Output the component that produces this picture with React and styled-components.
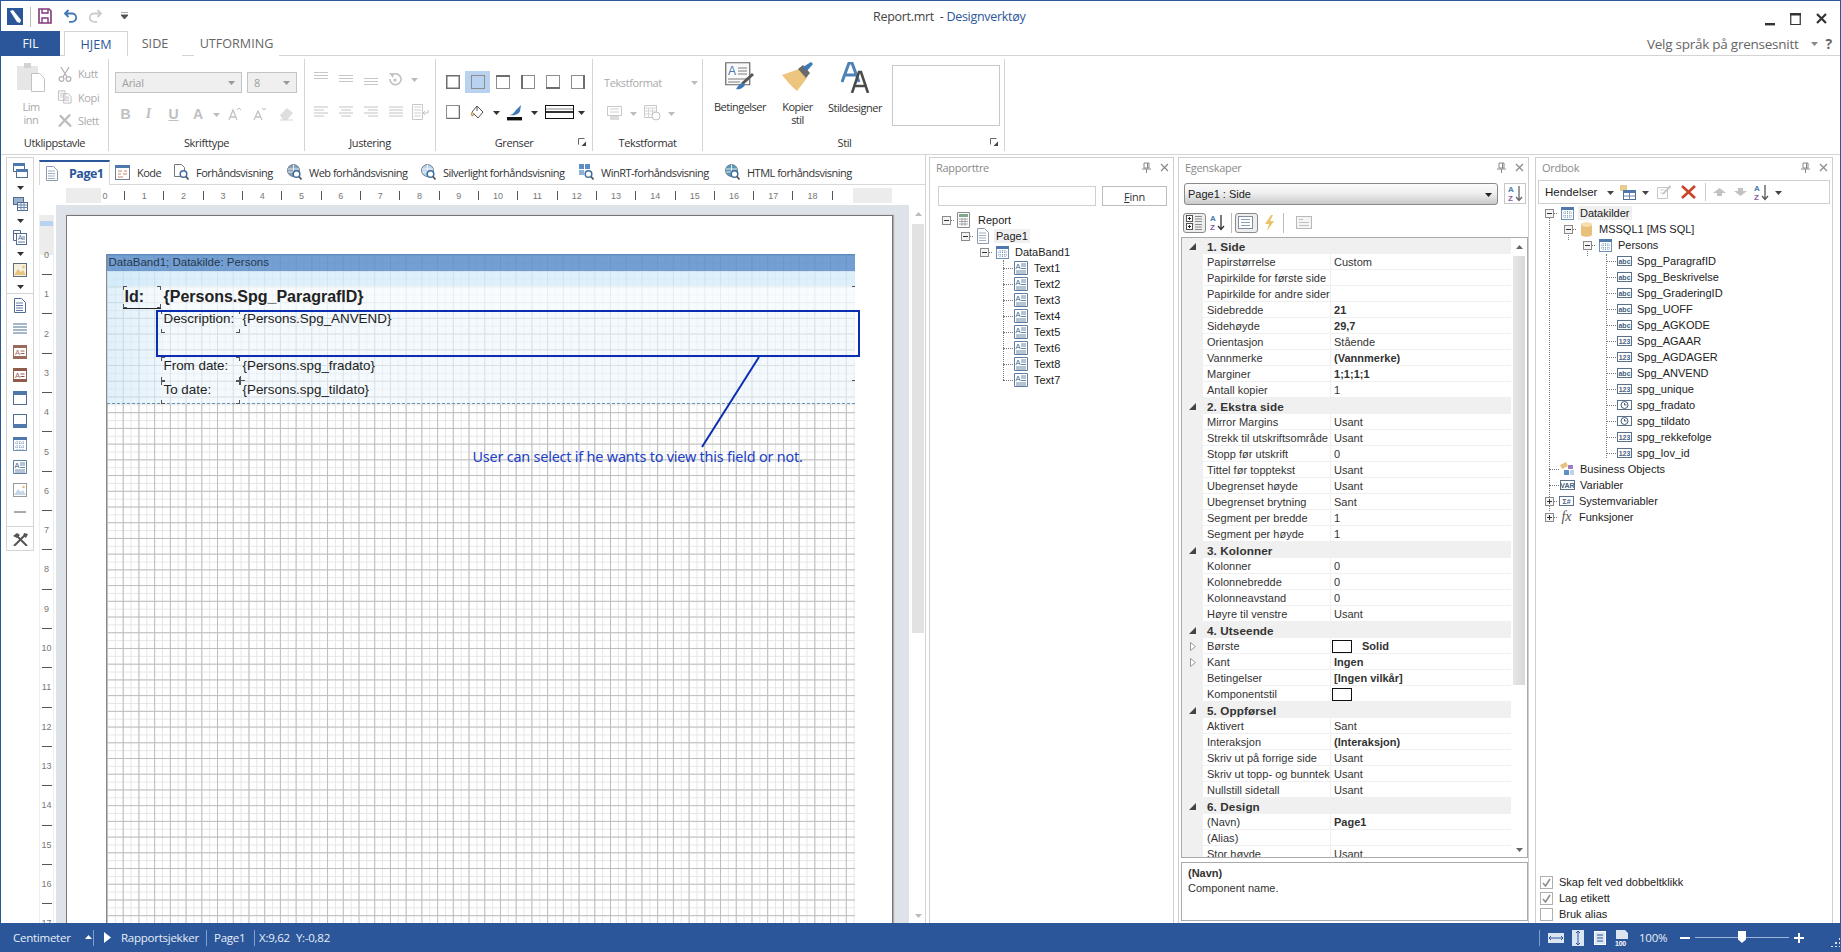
import React from 'react'
import styled, { createGlobalStyle } from 'styled-components'

const BLUE = '#2b579a'
const UI = `"Open Sans", "Liberation Sans", sans-serif`
const ARIAL = `"Liberation Sans", Arial, sans-serif`

const Global = createGlobalStyle`
  html, body { margin: 0; padding: 0; background: #fff; overflow: hidden; }
  * { box-sizing: border-box; }
  svg { display: block; flex: none; }
`

//---------------- icons ---------------------------------------------
const Svg = ({ w = 16, h = 16, children, ...rest }) => (
  <svg width={w} height={h} viewBox={`0 0 ${w} ${h}`} fill="none" {...rest}>{children}</svg>
)
const Caret = ({ color = '#444', up }) => (
  <Svg w={7} h={5}><path d={up ? 'M0 4h7L3.5 0z' : 'M0 1h7L3.5 5z'} fill={color} /></Svg>
)
const AppLogo = () => (
  <Svg w={16} h={17}><rect width="16" height="17" fill={BLUE} /><path d="M3 3l3-1 8 10-1 3-3-1z" fill="#fff" /></Svg>
)
const SaveIcon = () => (
  <Svg w={14} h={16}>
    <path d="M1 1h10l2 2v12H1z" stroke="#80397b" strokeWidth="1.6" />
    <path d="M4 1v4h6V1M4 15v-5h6v5" stroke="#80397b" strokeWidth="1.4" />
  </Svg>
)
const UndoIcon = ({ color, flip }) => (
  <Svg w={14} h={14} style={flip ? { transform: 'scaleX(-1)' } : null}>
    <path d="M4.5 1L1 4.5 4.5 8M1.5 4.5H8a4.2 4.2 0 010 8.4H5" stroke={color} strokeWidth="1.8" />
  </Svg>
)
const PinIcon = () => (
  <Svg w={9} h={11}><path d="M2 1h5v5H2zM5.5 1v5M0 7h9M4.5 7v4" stroke="#8a8a8a" /></Svg>
)
const CloseIcon = () => (
  <Svg w={9} h={9}><path d="M1 1l7 7M8 1L1 8" stroke="#8a8a8a" strokeWidth="1.2" /></Svg>
)
const WinMin = () => <Svg w={10} h={14}><rect y="11" width="10" height="2.4" fill="#333" /></Svg>
const WinMax = () => <Svg w={11} h={12}><path d="M.75 1.5h9.5v10H.75z" stroke="#333" strokeWidth="1.2" /><rect width="11" height="2.5" fill="#333" /></Svg>
const WinClose = () => <Svg w={11} h={11}><path d="M1 1l9 9M10 1l-9 9" stroke="#333" strokeWidth="2.2" /></Svg>

const PasteIcon = () => (
  <Svg w={28} h={30}>
    <path d="M0 4h21v24H0z" fill="#e6e6e6" /><path d="M7 1h7v5H7z" fill="#d2d2d2" />
    <path d="M14.5 11.5h8l5 5v13h-13z" fill="#fff" stroke="#c2c2c2" />
  </Svg>
)
const CutIcon = () => (
  <Svg w={14} h={16}>
    <circle cx="3.5" cy="13" r="2.4" stroke="#b4b4b4" strokeWidth="1.3" /><circle cx="10.5" cy="13" r="2.4" stroke="#b4b4b4" strokeWidth="1.3" />
    <path d="M5 11L11 1M9 11L3 1" stroke="#b4b4b4" strokeWidth="1.3" />
  </Svg>
)
const CopyIcon = () => (
  <Svg w={15} h={14}>
    <path d="M.5.5h7v10h-7zM6 3.5h5l3 3v7H6z" fill="#fff" stroke="#bbb" />
    <path d="M2 3h4M2 5h3M2 7h3M8 7h4M8 9h4M8 11h4" stroke="#c4c4c4" />
  </Svg>
)
const DeleteIcon = () => (
  <Svg w={15} h={15}><path d="M1 14L13 1M2 2l12 12" stroke="#bcbcbc" strokeWidth="2.4" /></Svg>
)
const Bars = ({ kind = 'left', color = '#c4c4c4', top = 0 }) => {
  const right = kind === 'right'
  const short = kind === 'justify' ? 14 : 10
  const x2 = right ? 4 : kind === 'center' ? 2 : 0
  return (
    <Svg w={14} h={12}>
      <path d={`M0 ${1 + top}h14M${x2} ${4 + top}h${short}M0 ${7 + top}h14M${x2} ${10 + top}h${short}`} stroke={color} />
    </Svg>
  )
}
const VAlignIcon = ({ at }) => (
  <Svg w={14} h={14}>
    <path d={`M0 ${at}.5h14M0 ${at + 3}.5h14M0 ${at + 6}.5h14`} stroke="#c6c6c6" />
  </Svg>
)
const RotateIcon = () => (
  <Svg w={14} h={15}>
    <path d="M4 3a5.5 5.5 0 11-2 4" stroke="#c2c2c2" strokeWidth="1.6" /><path d="M1 1l5 0-1 5z" fill="#c2c2c2" /><circle cx="7" cy="8" r="1.6" fill="#c2c2c2" />
  </Svg>
)
const WrapIcon = () => (
  <Svg w={17} h={17}>
    <path d="M.5.5h10v15H.5z" stroke="#c8c8c8" /><path d="M2 3h7M2 6h7M2 9h7M2 12h7" stroke="#d0d0d0" /><path d="M16 6v3h-5M13 7l-2 2 2 2" stroke="#c4c4c4" />
  </Svg>
)
const BorderBox = ({ side }) => {
  const dark = '#6e6e6e'
  return (
    <Svg w={14} h={14}>
      <rect x=".5" y=".5" width="13" height="13" stroke={side === 'all' ? dark : '#8d8d8d'} strokeWidth={side === 'all' ? 2 : 1} />
      {side === 'top' && <rect width="14" height="2" fill={dark} />}
      {side === 'left' && <rect width="2" height="14" fill={dark} />}
      {side === 'bottom' && <rect y="12" width="14" height="2" fill={dark} />}
      {side === 'right' && <rect x="12" width="2" height="14" fill={dark} />}
      {side === 'shadow' && <path d="M1 13.5h13M13.5 1v13" stroke={dark} strokeWidth="1.6" />}
    </Svg>
  )
}
const FillIcon = () => (
  <Svg w={15} h={15}>
    <path d="M7 1l6 6-5 6-6-6z" fill="#fff" stroke="#555" /><path d="M2 7l-1 3 2 1 1-3" fill="#f0c87c" stroke="#8a6b35" strokeWidth=".6" />
    <path d="M7 1v5" stroke="#555" />
  </Svg>
)
const PenIcon = () => (
  <Svg w={16} h={17}>
    <path d="M2 11c3 0 5-2 7-5l5-5-1 6c-1 3-5 5-11 4z" fill="#3e7ab8" /><rect y="13" width="15" height="3.4" fill="#111" />
  </Svg>
)
const LineStyle = () => (
  <Svg w={29} h={14}><rect x=".5" y=".5" width="28" height="13" stroke="#111" fill="#fff" /><path d="M1 7h27" stroke="#333" strokeWidth="2" /><path d="M1 4h27" stroke="#888" /></Svg>
)
const Launcher = () => (
  <Svg w={8} h={8}><path d="M.5 6.5V.5h6" stroke="#666" /><path d="M8 8H3.5L8 3.5z" fill="#444" /></Svg>
)
const FontA = ({ mark, small }) => (
  <Svg w={14} h={14}>
    <path d={small ? 'M1 13l4-9 4 9M2.5 10h5' : 'M1 13l4-10 4 10M2.5 10h5'} stroke="#c2c2c2" strokeWidth="1.3" />
    {mark === 'up' && <path d="M9 3l2-2 2 2" stroke="#bbb" />}
    {mark === 'down' && <path d="M9 1l2 2 2-2" stroke="#bbb" />}
  </Svg>
)
const EraserIcon = () => (
  <Svg w={15} h={14}><path d="M1 8l7-7 6 5-6 7H4z" fill="#dedede" /><path d="M1 13h13" stroke="#d5d5d5" /></Svg>
)
const TplIcon = () => (
  <Svg w={15} h={15}><path d="M.5.5h14v9h-14z" stroke="#c8c8c8" /><path d="M3 10h9v4H3z" fill="#dcdcdc" /><path d="M3 3h9M3 6h9" stroke="#d0d0d0" /></Svg>
)
const CalIcon = () => (
  <Svg w={17} h={16}><path d="M.5.5h12v12H.5z" stroke="#c8c8c8" /><path d="M.5 3h12M4.5 3v9M8.5 3v9M.5 6h12M.5 9h12" stroke="#d6d6d6" /><circle cx="12" cy="11" r="4" fill="#fff" stroke="#c0c0c0" /></Svg>
)
const ConditionIcon = () => (
  <Svg w={30} h={30}>
    <path d="M.75.75h24v22h-24z" fill="#fafafa" stroke="#666" strokeWidth="1.2" />
    <text x="3" y="13" fontFamily={ARIAL} fontSize="12" fill="#4a7ab0">A</text>
    <path d="M13 6h9M13 9h9M13 12h9M3 17h19M3 20h12" stroke="#7c7c7c" />
    <path d="M28 12L17 22" stroke="#555" strokeWidth="3" /><path d="M18 21c-3 0-5 3-7 6 4 1 7-1 9-4z" fill="#3f78b3" />
  </Svg>
)
const BrushIcon = () => (
  <Svg w={31} h={30}>
    <path d="M0 13L17 7l8 9-10 13C9 24 5 19 0 13z" fill="#edc57f" /><path d="M16 7l5-4 7 8-4 5z" fill="#6a6a6a" />
    <path d="M21 5l8-5 2 2-6 7z" fill="#3d7bb5" />
  </Svg>
)
const StyleDesignerIcon = () => (
  <Svg w={29} h={31}>
    <path d="M1 20L8 1h3l7 19M4 13h10" stroke="#4f81b5" strokeWidth="3" />
    <path d="M11 31L18 10h2l7 21M14 24h12" stroke="#4b4b4b" strokeWidth="2.6" />
  </Svg>
)
const TextItem = () => (
  <Svg w={14} h={14}>
    <path d="M.5.5h13v13H.5z" fill="#fff" stroke="#5d7da3" />
    <text x="1.5" y="8" fontFamily={ARIAL} fontSize="7.5" fill="#3d5f88">A</text>
    <path d="M7 3h5M7 5h5M7 7.5h5M2 10h10M2 12h10" stroke="#6d86a5" />
  </Svg>
)
const ReportIcon = () => (
  <Svg w={14} h={16}>
    <path d="M.5.5h12v15H.5z" fill="#fff" stroke="#8a8a8a" /><rect x="2" y="2" width="9" height="3" fill="#7da88c" />
    <path d="M2 7h9M2 9.5h9M2 12h9M5 6v8M8 6v8" stroke="#a4a4a4" />
  </Svg>
)
const PageIcon = ({ size = 16, dark }) => (
  <Svg w={12} h={size}>
    <path d={`M.5.5h7l4 4v${size - 5}H.5z`} fill="#fff" stroke={dark ? '#4f6c92' : '#8d9bad'} />
    <path d="M2 5h7M2 7.5h7M2 10h7M2 12.5h7" stroke={dark ? '#5e7a9c' : '#9fb0c4'} />
  </Svg>
)
const TableIcon = ({ size = 13 }) => (
  <Svg w={size} h={size}>
    <rect x=".5" y=".5" width={size - 1} height={size - 1} fill="#fff" stroke="#6f8fb5" />
    <rect x="0" y="0" width={size} height="3" fill="#4f79ad" />
    <path d={`M2 6h${size - 4}M2 ${size - 4}h${size - 4}M${size / 2} 4v${size - 5}M4 4v${size - 5}M${size - 4} 4v${size - 5}`} stroke="#7f9cc0" strokeDasharray="1 1" />
  </Svg>
)
const CylinderIcon = () => (
  <Svg w={11} h={15}>
    <path d="M0 2.5v10C0 15.5 11 15.5 11 12.5v-10z" fill="#e8c07c" /><ellipse cx="5.5" cy="2.5" rx="5.5" ry="2.3" fill="#f5deb0" />
  </Svg>
)
const FieldBadge = ({ label }) => (
  <Svg w={15} h={10}>
    <rect x=".5" y=".5" width="14" height="9" fill="#fff" stroke="#5a6f8a" />
    <text x="7.5" y="7.5" textAnchor="middle" fontFamily={ARIAL} fontSize="7" fontWeight="700" fill="#47607f">{label}</text>
  </Svg>
)
const ClockBadge = () => (
  <Svg w={15} h={10}>
    <rect x=".5" y=".5" width="14" height="9" fill="#fff" stroke="#5a6f8a" /><circle cx="7.5" cy="5" r="3.5" stroke="#47607f" /><path d="M7.5 3v2h2" stroke="#47607f" />
  </Svg>
)
const BusinessIcon = () => (
  <Svg w={15} h={14}>
    <path d="M0 3l6-3 2 4-6 3z" fill="#e7c27f" /><path d="M8 3h5v4H8z" fill="#9b7fc0" /><path d="M4 8h5v5H4z" fill="#5d8fc4" /><path d="M10 8h4v5h-4z" fill="#bcd3ea" />
  </Svg>
)
const FxGlyph = styled.i`
  font: italic 14px "Liberation Serif", serif;
  color: #555;
  width: 15px;
  text-align: center;
`
const PlusMinus = ({ plus }) => (
  <Svg w={9} h={9}>
    <rect x=".5" y=".5" width="8" height="8" fill="#f4f4f4" stroke="#8a8a8a" />
    <path d={plus ? 'M2 4.5h5M4.5 2v5' : 'M2 4.5h5'} stroke="#333" />
  </Svg>
)
const ToolA = ({ color = '#9a6a5a' }) => (
  <Svg w={14} h={14}>
    <rect x=".5" y=".5" width="13" height="13" fill="#fff" stroke={color} />
    <rect x="1" y="1" width="12" height="2" fill={color} /><rect x="1" y="11" width="12" height="2" fill={color} />
    <text x="2" y="10" fontFamily={ARIAL} fontSize="7.5" fill={color}>A</text><path d="M7.5 6h4M7.5 8.5h4" stroke={color} />
  </Svg>
)
const WinBand = ({ at }) => (
  <Svg w={14} h={14}>
    <rect x=".5" y=".5" width="13" height="13" fill="#fff" stroke="#4f6c92" />
    <rect x="0" y={at === 'top' ? 0 : 10} width="14" height="4" fill="#4f79ad" />
  </Svg>
)
const WindowsIcon = () => (
  <Svg w={15} h={15}>
    <rect x=".5" y=".5" width="11" height="8" fill="#fff" stroke="#4f6c92" /><rect width="12" height="3" fill="#4f79ad" />
    <rect x="3.5" y="6.5" width="11" height="8" fill="#fff" stroke="#4f6c92" /><rect x="3" y="6" width="12" height="3" fill="#4f79ad" />
  </Svg>
)
const GridTool = () => (
  <Svg w={15} h={14}>
    <rect x=".5" y=".5" width="10" height="7" fill="#9cb3cf" stroke="#4f6c92" />
    <rect x="4.5" y="5.5" width="10" height="8" fill="#fff" stroke="#4f6c92" /><path d="M4.5 8h10M4.5 10.5h10M8 6v8M11 6v8" stroke="#6a86a8" />
  </Svg>
)
const DocsTool = () => (
  <Svg w={14} h={15}>
    <path d="M.5.5h7v3h-7zM.5.5v10h3" stroke="#4f6c92" /><rect x="3.5" y="3.5" width="10" height="11" fill="#fff" stroke="#4f6c92" />
    <text x="5" y="10" fontFamily={ARIAL} fontSize="6.5" fill="#3d5f88">A</text><path d="M9 7h3M9 9h3M5 12h7" stroke="#5e7a9c" />
  </Svg>
)
const PictureTool = ({ soft }) => (
  <Svg w={14} h={14}>
    <rect x=".5" y=".5" width="13" height="13" fill={soft ? '#fff' : '#f6f1df'} stroke={soft ? '#9a9a9a' : '#5f6b7a'} />
    <path d="M1 12l4-6 3 3 2-2 3 5z" fill={soft ? '#c5d6e8' : '#e7c27f'} /><circle cx="10.5" cy="4" r="1.3" fill="#e7c27f" />
  </Svg>
)
const ToolsIcon = () => (
  <Svg w={15} h={13}>
    <path d="M1 13L11 3M14 13L4 3" stroke="#555" strokeWidth="2" /><path d="M0 3l4-3 3 2-3 3zM11 0l4 1-2 4-3-2z" fill="#555" />
  </Svg>
)
const PreviewIcon = ({ tint = '#777' }) => (
  <Svg w={15} h={16}>
    <path d="M.5.5h7l3 3v9h-10z" fill="#fff" stroke={tint} /><circle cx="9.5" cy="10" r="3.3" fill="#fff" stroke="#3f6d9f" strokeWidth="1.5" /><path d="M12 12.5l2.5 3" stroke="#555" strokeWidth="1.8" />
  </Svg>
)
const GlobeIcon = ({ color = '#8aa0b6' }) => (
  <Svg w={15} h={16}>
    <circle cx="6.5" cy="6.5" r="6" fill={color} stroke="#6c7f92" /><path d="M1 5h11M1 8h11M6.5 .5v12" stroke="#fff" strokeWidth=".8" />
    <circle cx="9.5" cy="10" r="3.3" fill="#fff" stroke="#3f6d9f" strokeWidth="1.5" /><path d="M12 12.5l2.5 3" stroke="#555" strokeWidth="1.8" />
  </Svg>
)
const WinRtIcon = () => (
  <Svg w={15} h={16}>
    <rect width="5" height="5" fill="#5b8cc4" /><rect x="6" width="5" height="5" fill="#5b8cc4" /><rect y="6" width="5" height="5" fill="#8fb2da" />
    <circle cx="9.5" cy="10" r="3.3" fill="#fff" stroke="#3f6d9f" strokeWidth="1.5" /><path d="M12 12.5l2.5 3" stroke="#555" strokeWidth="1.8" />
  </Svg>
)
const CodeIcon = () => (
  <Svg w={15} h={15}>
    <rect x=".5" y=".5" width="14" height="14" fill="#fff" stroke="#6f7f92" /><rect width="15" height="3" fill="#4f79ad" />
    <path d="M3 6h4M9 6h3M3 9h3M8 9h4M3 12h5" stroke="#c9836b" />
  </Svg>
)
const LinesBox = () => (
  <Svg w={17} h={14}>
    <rect x=".5" y=".5" width="14" height="12" fill="#fff" stroke="#7f8fa3" /><path d="M3 3.5h9M3 6.5h9M3 9.5h9" stroke="#8fa0b5" />
  </Svg>
)
const CategorizedIcon = () => (
  <Svg w={17} h={15}>
    <rect x=".5" y=".5" width="6" height="6" fill="#fff" stroke="#555" /><rect x=".5" y="8.5" width="6" height="6" fill="#fff" stroke="#555" />
    <path d="M2 3.5h3M3.5 2v3M2 11.5h3M3.5 10v3" stroke="#222" /><path d="M9 1.5h7M9 4h7M9 6.5h7M9 9.5h7M9 12h7M9 14.5h7" stroke="#8a8a8a" />
  </Svg>
)
const SortAz = ({ arrow = '#333' }) => (
  <Svg w={15} h={17}>
    <text x="0" y="7" fontFamily={ARIAL} fontSize="8" fontWeight="700" fill="#4a7ab0">A</text>
    <text x="0" y="16" fontFamily={ARIAL} fontSize="8" fontWeight="700" fill="#8b5aa8">Z</text>
    <path d="M11 1v14M8 12l3 3.5 3-3.5" stroke={arrow} strokeWidth="1.3" />
  </Svg>
)
const BoltIcon = () => <Svg w={11} h={16}><path d="M7 0L1 9h4l-2 7 7-10H6l3-6z" fill="#e9c46a" /></Svg>
const FormIcon = () => (
  <Svg w={16} h={13}><rect x=".5" y=".5" width="15" height="12" fill="#f4f4f4" stroke="#b8b8b8" /><path d="M3 3.5h4M3 6.5h10M3 9.5h10" stroke="#c0c0c0" /></Svg>
)
const EditIcon = () => (
  <Svg w={14} h={14}><path d="M.5 2.5h10v11H.5z" stroke="#c6c6c6" /><path d="M3 5h5M3 8h5" stroke="#d0d0d0" /><path d="M13 0L6 8l-1 2 2-1 7-7z" fill="#c0c0c0" /></Svg>
)
const RedX = () => <Svg w={15} h={14}><path d="M1 1l13 12M14 1L1 13" stroke="#c8442a" strokeWidth="2.6" /></Svg>
const Arrow = ({ down }) => (
  <Svg w={13} h={8}><path d={down ? 'M4 0h5v3h4L6.5 8 0 3h4z' : 'M4 8h5V5h4L6.5 0 0 5h4z'} fill="#c2c2c2" /></Svg>
)
const NewSourceIcon = () => (
  <Svg w={16} h={15}>
    <rect width="7" height="6" fill="#e9cc8f" /><rect x="3.5" y="5.5" width="12" height="9" fill="#fff" stroke="#4f6c92" />
    <rect x="3" y="5" width="13" height="3" fill="#4f79ad" /><path d="M3.5 11h12M9.5 8v7" stroke="#6a86a8" />
  </Svg>
)
const CheckMark = () => <Svg w={9} h={9}><path d="M1 5l2.5 3L8 1" stroke="#8f8f8f" strokeWidth="1.6" /></Svg>
const StatusIcon = ({ kind }) => (
  <Svg w={16} h={16}>
    {kind === 'width' && <><rect x="0" y="3" width="16" height="10" fill="#dce6f2" /><path d="M1 8h14M3 6L1 8l2 2M13 6l2 2-2 2" stroke={BLUE} /></>}
    {kind === 'height' && <><rect x="2" y="0" width="12" height="16" fill="#dce6f2" /><path d="M8 1v14M6 3l2-2 2 2M6 13l2 2 2-2" stroke={BLUE} /></>}
    {kind === 'page' && <><rect x="2.5" y="1.5" width="11" height="13" fill="#dce6f2" stroke="#fff" /><path d="M5 5h6M5 8h6M5 11h6" stroke={BLUE} /></>}
    {kind === '100' && <><path d="M2 0h9l3 3v6H2z" fill="#dce6f2" /><rect y="9" width="16" height="7" fill={BLUE} /><text x="1" y="15.5" fontFamily={ARIAL} fontSize="7" fontWeight="700" fill="#fff">100</text></>}
  </Svg>
)

//---------------- window frame --------------------------------------
const Frame = styled.div`
  width: 1841px;
  height: 952px;
  display: flex;
  flex-direction: column;
  overflow: hidden;
  border-top: 1px solid ${BLUE};
  border-left: 1px solid ${BLUE};
  border-right: 1px solid ${BLUE};
  font-family: ${UI};
  color: #333;
  background: #fff;
`
const TitleBar = styled.div`
  height: 30px;
  display: flex;
  align-items: center;
  flex: none;
`
const Qat = styled.div`
  width: 872px;
  display: flex;
  align-items: center;
  padding-left: 6px;
`
const QatSep = styled.div`
  width: 1px;
  height: 20px;
  margin: 2px 7px 0 7px;
  background: #bbb;
`
const QatButton = styled.div`
  width: ${p => p.$w}px;
  display: flex;
`
const TitleText = styled.div`
  font-size: 12.5px;
  letter-spacing: -0.3px;
  color: #444;
  span { color: ${BLUE}; }
`
const WinButtons = styled.div`
  margin-left: auto;
  display: flex;
  align-items: center;
  gap: 15px;
  padding: 0 13px 0 0;
  margin-top: 5px;
`
const TabRow = styled.div`
  height: 25px;
  flex: none;
  display: flex;
  border-bottom: 1px solid #d4d4d4;
`
const FileTab = styled.div`
  width: 59px;
  height: 25px;
  background: ${BLUE};
  color: #fff;
  font-size: 12px;
  display: flex;
  align-items: center;
  justify-content: center;
`
const RibbonTab = styled.div`
  height: 25px;
  width: ${p => p.$w}px;
  margin-left: ${p => p.$ml || 0}px;
  font-size: 12.6px;
  display: flex;
  align-items: center;
  justify-content: center;
  color: ${p => (p.$active ? BLUE : '#666')};
  background: #fff;
  ${p => p.$active && `border: 1px solid #d4d4d4; border-bottom: 0; position: relative;`}
`
const LangPicker = styled.div`
  margin-left: auto;
  display: flex;
  align-items: center;
  font-size: 13.5px;
  letter-spacing: -0.25px;
  color: #666;
  padding: 1px 8px 0 0;
  b { margin-left: 8px; font-size: 14px; }
  svg { margin-left: 12px; }
`

//---------------- ribbon --------------------------------------------
const Ribbon = styled.div`
  height: 99px;
  flex: none;
  display: flex;
  border-bottom: 1px solid #d4d4d4;
  padding-top: 3px;
`
const Group = styled.div`
  width: ${p => p.$w}px;
  height: 92px;
  border-right: 1px solid #d4d4d4;
  display: flex;
  flex-direction: column;
  padding-left: ${p => p.$pl || 0}px;
  flex: none;
`
const GroupBody = styled.div`
  height: 74px;
  display: flex;
  flex-direction: ${p => (p.$col ? 'column' : 'row')};
`
const GroupLabel = styled.div`
  height: 18px;
  margin-left: ${p => -(p.$pl || 0)}px;
  padding-right: ${p => p.$pr || 0}px;
  display: flex;
  align-items: center;
  justify-content: center;
  position: relative;
  font-size: 11px;
  letter-spacing: -0.4px;
  color: #333;
  svg { position: absolute; right: 6px; top: 5px; }
`
const BigButton = styled.div`
  width: ${p => p.$w}px;
  display: flex;
  flex-direction: column;
  align-items: center;
  font-size: 11px;
  letter-spacing: -0.5px;
  line-height: 13px;
  text-align: center;
  color: ${p => (p.$off ? '#aaa' : '#333')};
  padding-top: 3px;
  flex: none;
  svg { margin-bottom: 8px; }
`
const SmallCol = styled.div`
  display: flex;
  flex-direction: column;
  margin-left: 13px;
  padding-top: 3px;
`
const SmallRow = styled.div`
  height: 23.5px;
  display: flex;
  align-items: center;
  gap: 6px;
  font-size: 11px;
  letter-spacing: -0.4px;
  color: #aaa;
  svg { width: 14px; }
`
const ToolRow = styled.div`
  display: flex;
  align-items: center;
  height: ${p => p.$h || 22}px;
  margin-top: ${p => p.$mt || 0}px;
`
const Combo = styled.div`
  width: ${p => p.$w}px;
  height: 21px;
  margin-right: 5px;
  background: #efefef;
  border: 1px solid #c4c4c4;
  display: flex;
  align-items: center;
  justify-content: space-between;
  padding: 0 6px;
  font-size: 11px;
  color: #a0a0a0;
  letter-spacing: -0.3px;
`
const Cell = styled.div`
  width: ${p => p.$w || 25}px;
  height: 22px;
  display: flex;
  align-items: center;
  justify-content: center;
  flex: none;
  background: ${p => (p.$on ? '#b9d2f0' : 'transparent')};
`
const FontLetter = styled.span`
  font: ${p => (p.$b ? 700 : 400)} 14px ${p => (p.$serif ? `"Liberation Serif", serif` : ARIAL)};
  font-style: ${p => (p.$i ? 'italic' : 'normal')};
  text-decoration: ${p => (p.$u ? 'underline' : 'none')};
  color: #c0c0c0;
`
const StylePreview = styled.div`
  width: 108px;
  height: 61px;
  margin: 6px 0 0 8px;
  border: 1px solid #c8c8c8;
`
const DisabledText = styled.div`
  font-size: 11px;
  letter-spacing: -0.4px;
  color: #aaa;
  width: 87px;
`

//---------------- main area -----------------------------------------
const Main = styled.div`
  flex: 1;
  display: flex;
  min-height: 0;
`
const ToolColumn = styled.div`
  width: 38px;
  flex: none;
  padding: 2px 0 0 5px;
`
const ToolBox = styled.div`
  width: 28px;
  height: 394px;
  border: 1px solid #d4d4d4;
  display: flex;
  flex-direction: column;
  align-items: center;
`
const ToolItem = styled.div`
  height: ${p => p.$h}px;
  display: flex;
  align-items: center;
  justify-content: center;
  flex: none;
`
const ToolDivider = styled.div`
  width: 26px;
  height: 1px;
  background: #d4d4d4;
  margin: ${p => p.$m};
  flex: none;
`
const Designer = styled.div`
  width: 887px;
  flex: none;
  display: flex;
  flex-direction: column;
  border-right: 1px solid #d4d4d4;
  min-height: 0;
`
const DocTabs = styled.div`
  height: 25px;
  margin-top: 5px;
  flex: none;
  display: flex;
  align-items: center;
  border-bottom: 1px solid #d8d8d8;
`
const ActiveDocTab = styled.div`
  width: 71px;
  height: 25px;
  border: 1px solid #d8d8d8;
  border-top: 2px solid ${BLUE};
  border-bottom: 0;
  background: #fff;
  display: flex;
  align-items: center;
  gap: 11px;
  padding-left: 6px;
  margin-right: 5px;
  font-size: 12.5px;
  font-weight: 700;
  letter-spacing: -0.5px;
  color: ${BLUE};
`
const DocTab = styled.div`
  display: flex;
  align-items: center;
  width: ${p => p.$w}px;
  gap: 7px;
  flex: none;
  font-size: 11px;
  letter-spacing: -0.5px;
  color: #333;
`
const HRuler = styled.div`
  width: 826px;
  height: 15px;
  margin: 3px 0 2px 27px;
  flex: none;
  display: flex;
  align-items: center;
  padding-left: 29.17px;
  overflow: hidden;
  background: linear-gradient(90deg, #ececec 35px, #fff 35px, #fff 787px, #ececec 787px);
`
const HCell = styled.div`
  width: 19.665px;
  flex: none;
  text-align: center;
  font: 9px ${ARIAL};
  color: #777;
  display: flex;
  justify-content: center;
  i { width: 1px; height: 9px; background: #555; display: block; }
`
const Work = styled.div`
  flex: 1;
  min-height: 0;
  display: flex;
  overflow: hidden;
`
const VRuler = styled.div`
  width: 15px;
  margin-top: 10px;
  flex: none;
  padding-top: 30.17px;
  overflow: hidden;
  background:
    linear-gradient(#b9d2f0, #b9d2f0) 0 6px / 100% 5px no-repeat,
    linear-gradient(#ececec, #ececec) 0 0 / 100% 40px no-repeat;
  border-left: 1px solid #eee;
  border-right: 1px solid #eee;
`
const VCell = styled.div`
  height: 19.665px;
  display: flex;
  align-items: center;
  justify-content: center;
  font: 9px ${ARIAL};
  color: #777;
  i { width: 10px; height: 1px; background: #555; display: block; }
`
const Canvas = styled.div`
  width: 853px;
  margin-left: 2px;
  flex: none;
  background: #dee3ea;
  padding: 10px 0 0 10px;
  overflow: hidden;
`
const PageSheet = styled.div`
  width: 826px;
  height: 800px;
  background: #fff;
  border-top: 1px solid #777;
  border-left: 1px solid #777;
  box-shadow: 1px 0 0 #777, 2px 0 1px #aaa;
  padding: 38px 0 0 38.5px;
`
const ReportArea = styled.div`
  position: relative;
  width: 749px;
  height: 760px;
  border-left: 1px solid #8a8a8a;
  background-color: #fff;
  background-image:
    linear-gradient(90deg, #bdbdbd 1px, transparent 1px),
    linear-gradient(#bdbdbd 1px, transparent 1px),
    linear-gradient(90deg, #e6e6e6 1px, transparent 1px),
    linear-gradient(#e6e6e6 1px, transparent 1px);
  background-size: 15.73px 15.73px, 15.73px 15.73px, 7.865px 7.865px, 7.865px 7.865px;
  background-position: 0 1px;
`
const BandHeader = styled.div`
  height: 17px;
  background: rgba(92, 143, 203, 0.86);
  border-top: 1px solid #5f8cc0;
  font: 11.5px ${ARIAL};
  color: #27384d;
  padding-left: 2px;
  line-height: 15px;
`
const Band = styled.div`
  position: relative;
  height: 133px;
  border-bottom: 1px dashed #6f93ad;
  background:
    linear-gradient(rgba(196, 228, 248, 0.45) 15px, transparent 15px),
    linear-gradient(90deg, rgba(205, 232, 248, 0.62), rgba(226, 241, 251, 0.62) 54px, rgba(236, 246, 253, 0.62) 54px);
`
const Field = styled.div`
  position: absolute;
  left: ${p => p.$x}px;
  top: ${p => p.$y}px;
  width: ${p => p.$w}px;
  height: ${p => p.$h}px;
  padding-left: ${p => (p.$pad === undefined ? 3 : p.$pad)}px;
  font: ${p => (p.$bold ? '700 16px' : '13.4px')} ${ARIAL};
  line-height: ${p => (p.$bold ? p.$h - 2 : 18)}px;
  color: #222;
  white-space: nowrap;
  ${p => p.$white && 'background: rgba(255,255,255,.4);'}
  ${p => p.$rule && 'border-bottom: 1px solid #222;'}
  ${p => p.$marks && `
    --m: #555;
    background-image:
      linear-gradient(var(--m), var(--m)), linear-gradient(var(--m), var(--m)),
      linear-gradient(var(--m), var(--m)), linear-gradient(var(--m), var(--m)),
      linear-gradient(var(--m), var(--m)), linear-gradient(var(--m), var(--m)),
      linear-gradient(var(--m), var(--m)), linear-gradient(var(--m), var(--m));
    background-size: 4px 1px, 1px 4px, 4px 1px, 1px 4px, 4px 1px, 1px 4px, 4px 1px, 1px 4px;
    background-repeat: no-repeat;
    background-position: 0 0, 0 0, 100% 0, 100% 0, 0 100%, 0 100%, 100% 100%, 100% 100%;
  `}
`
const Cross = styled.div`
  position: absolute;
  left: ${p => p.$x - 4}px;
  top: ${p => p.$y - 4}px;
  width: 9px;
  height: 9px;
  background:
    linear-gradient(#555, #555) 50% 50% / 100% 1px no-repeat,
    linear-gradient(#555, #555) 50% 50% / 1px 100% no-repeat;
`
const EdgeTick = styled.div`
  position: absolute;
  right: 0;
  top: ${p => p.$y}px;
  width: 3px;
  height: 1px;
  background: #555;
`
const Highlight = styled.div`
  position: absolute;
  left: 49.5px;
  top: 56px;
  width: 704px;
  height: 47px;
  border: 2.5px solid #0b2db0;
`
const Pointer = styled.svg`
  position: absolute;
  left: 594px;
  top: 102px;
`
const Note = styled.div`
  position: absolute;
  left: 366px;
  top: 193px;
  font: 14.4px "Noto Sans", sans-serif;
  letter-spacing: -0.2px;
  color: #1b3ec6;
  white-space: nowrap;
`
const ScrollTrack = styled.div`
  width: 12px;
  margin-left: 3px;
  flex: none;
  display: flex;
  flex-direction: column;
  align-items: center;
`
const ScrollEnd = styled.div`
  height: ${p => p.$h}px;
  flex: ${p => (p.$grow ? 1 : 'none')};
  display: flex;
  align-items: center;
  justify-content: center;
`
const ScrollThumb = styled.div`
  width: 12px;
  height: ${p => p.$h}px;
  background: ${p => p.$color || '#e2e2e2'};
  flex: none;
`

//---------------- docked panels -------------------------------------
const Panel = styled.div`
  width: ${p => p.$w}px;
  margin: 2px 0 0 ${p => p.$ml}px;
  flex: none;
  border: 1px solid #cfcfcf;
  border-bottom: 0;
  display: flex;
  flex-direction: column;
  min-height: 0;
  position: relative;
  overflow: hidden;
`
const PanelHead = styled.div`
  height: 19px;
  flex: none;
  display: flex;
  align-items: center;
  padding: 0 4px 0 6px;
  font-size: 11px;
  letter-spacing: -0.3px;
  color: #8a8a8a;
  svg:first-of-type { margin-left: auto; }
  svg:last-of-type { margin-left: 9px; }
`
const SearchRow = styled.div`
  display: flex;
  padding: 9px 0 0 8px;
  gap: 6px;
`
const SearchBox = styled.div`
  width: 158px;
  height: 20px;
  border: 1px solid #d0d0d0;
`
const FindButton = styled.div`
  width: 65px;
  height: 20px;
  border: 1px solid #bdbdbd;
  font-size: 11px;
  letter-spacing: -0.3px;
  display: flex;
  align-items: center;
  justify-content: center;
  u { text-decoration: underline; }
`
const Tree = styled.div`
  position: relative;
  padding-top: ${p => p.$top}px;
  flex: ${p => (p.$grow ? 1 : 'none')};
`
const TreeRow = styled.div`
  position: relative;
  height: 16px;
  display: flex;
  align-items: center;
  padding-left: ${p => p.$left}px;
  font: 11px ${ARIAL};
  color: #222;
  white-space: nowrap;
`
const Toggle = styled.div`
  position: relative;
  width: 9px;
  display: flex;
  margin-right: ${p => p.$gap}px;
  flex: none;
  &::after {
    content: '';
    width: 3px;
    border-top: 1px dotted #777;
    position: absolute;
    left: 9px;
    top: 4px;
  }
`
const Stub = styled.div`
  width: ${p => p.$w}px;
  border-top: 1px dotted #777;
  margin-right: 1px;
  flex: none;
`
const IconSlot = styled.div`
  width: ${p => p.$w}px;
  display: flex;
  justify-content: center;
  flex: none;
`
const NodeLabel = styled.span`
  margin-left: ${p => p.$ml || 3}px;
  padding: 1px 2px;
  background: ${p => (p.$sel ? '#f0f0f0' : 'transparent')};
`
const TreeLine = styled.div`
  position: absolute;
  left: ${p => p.$x}px;
  top: ${p => p.$y}px;
  height: ${p => p.$h}px;
  border-left: 1px dotted #777;
`

const ComboRow = styled.div`
  display: flex;
  padding: 6px 0 0 5px;
  gap: 6px;
`
const SideCombo = styled.div`
  width: 314px;
  height: 22px;
  border: 1px solid #8a8a8a;
  border-radius: 3px;
  background: linear-gradient(#fbfbfb, #f0f0f0 45%, #c9c9c9);
  display: flex;
  align-items: center;
  justify-content: space-between;
  padding: 0 5px 0 3px;
  font: 11px ${ARIAL};
  color: #222;
`
const SquareButton = styled.div`
  width: 22px;
  height: 21px;
  border: 1px solid #c8c8c8;
  display: flex;
  align-items: center;
  justify-content: center;
`
const PropTools = styled.div`
  height: 32px;
  display: flex;
  align-items: center;
  padding: 3px 0 0 4px;
  flex: none;
`
const PropToggle = styled.div`
  width: 23px;
  height: 20px;
  border: 1px solid ${p => (p.$on ? '#8a8a8a' : 'transparent')};
  border-radius: 3px;
  background: ${p => (p.$on ? '#eee' : 'transparent')};
  display: flex;
  align-items: center;
  justify-content: center;
  margin-left: ${p => p.$ml || 0}px;
  flex: none;
`
const PropSep = styled.div`
  width: 1px;
  height: 20px;
  background: #bbb;
  margin: ${p => p.$m};
  flex: none;
`
const PropGrid = styled.div`
  height: 621px;
  margin: 0 0 0 2px;
  flex: none;
  border: 1px solid #aaa;
  display: flex;
  overflow: hidden;
`
const PropRows = styled.div`
  width: 329px;
  flex: none;
  overflow: hidden;
`
const SectionRow = styled.div`
  height: 16px;
  display: flex;
  align-items: center;
  background: #f0f0f0;
  font: 700 11.7px ${ARIAL};
  color: #333;
  letter-spacing: 0.1px;
`
const Gutter = styled.div`
  width: 21px;
  flex: none;
  height: 100%;
  background: #f0f0f0;
  display: flex;
  align-items: center;
  justify-content: center;
`
const PropRow = styled.div`
  height: 16px;
  display: flex;
  font: 11px ${ARIAL};
  color: #333;
  letter-spacing: 0.02px;
`
const PropName = styled.div`
  width: 127px;
  flex: none;
  padding-left: 4px;
  line-height: 16px;
  overflow: hidden;
  white-space: nowrap;
  border-bottom: 1px solid #f0f0f0;
`
const SectionName = styled.span`
  padding-left: 4px;
  line-height: 15px;
  white-space: nowrap;
`
const PropValue = styled.div`
  flex: 1;
  border-left: 1px solid #f0f0f0;
  border-bottom: 1px solid #f0f0f0;
  padding: 1px 0 0 3px;
  line-height: 15px;
  font-weight: ${p => (p.$bold ? 700 : 400)};
  display: flex;
  align-items: center;
  height: 16px;
`
const Swatch = styled.span`
  width: 20px;
  height: 13px;
  border: 1px solid #111;
  background: #fff;
  margin: 0 10px 0 -2px;
  flex: none;
`
const PropScroll = styled.div`
  width: 16px;
  flex: none;
  display: flex;
  flex-direction: column;
  align-items: center;
`
const DescBox = styled.div`
  height: 59px;
  margin: 4px 0 0 2px;
  flex: none;
  border: 1px solid #aaa;
  padding: 3px 6px;
  font: 11px ${ARIAL};
  line-height: 15px;
  color: #333;
  b { display: block; }
`
const DictTools = styled.div`
  height: 24px;
  margin: 3px 2px 0 2px;
  flex: none;
  border: 1px solid #cfcfcf;
  display: flex;
  align-items: center;
  font: 11.5px ${ARIAL};
  color: #222;
`
const DictItem = styled.div`
  width: ${p => p.$w}px;
  display: flex;
  justify-content: ${p => (p.$start ? 'flex-start' : 'center')};
  padding-left: ${p => (p.$start ? 6 : 0)}px;
  flex: none;
`
const DictSep = styled.div`
  width: 1px;
  height: 18px;
  background: #ccc;
  margin: 0 6px;
  flex: none;
`
const CheckRow = styled.div`
  height: 16px;
  display: flex;
  align-items: center;
  gap: 6px;
  padding-left: 4px;
  font: 11px ${ARIAL};
  color: #222;
`
const CheckBox = styled.div`
  width: 13px;
  height: 13px;
  border: 1px solid #b0b0b0;
  display: flex;
  align-items: center;
  justify-content: center;
  flex: none;
`
const CheckList = styled.div`
  padding-bottom: 1px;
`

//---------------- status bar ----------------------------------------
const StatusBar = styled.div`
  height: 29px;
  flex: none;
  background: ${BLUE};
  display: flex;
  align-items: center;
  color: #e8eef7;
  font-size: 11.5px;
  letter-spacing: -0.25px;
`
const StatusItem = styled.div`
  display: flex;
  align-items: center;
  width: ${p => p.$w}px;
  padding-left: ${p => p.$pl}px;
  flex: none;
  gap: ${p => p.$gap || 0}px;
`
const StatusSep = styled.div`
  width: 1px;
  height: 16px;
  background: #7f9fcc;
  flex: none;
`
const Slider = styled.div`
  position: relative;
  width: 95px;
  height: 1px;
  background: #9db5d8;
  margin: 0 5px 0 5px;
  &::after {
    content: '';
    position: absolute;
    left: 43px;
    top: -6px;
    width: 8px;
    height: 12px;
    background: #fff;
    clip-path: polygon(0 0, 100% 0, 100% 70%, 50% 100%, 0 70%);
  }
`
const Grip = styled.div`
  width: 10px;
  height: 10px;
  margin: 9px 0 0 26px;
  background-image: radial-gradient(#dbe5f2 1px, transparent 1.3px);
  background-size: 4px 4px;
  clip-path: polygon(100% 0, 100% 100%, 0 100%);
`

//---------------- data ----------------------------------------------
const props = [
  { section: '1. Side' },
  ['Papirstørrelse', 'Custom'], ['Papirkilde for første side', ''], ['Papirkilde for andre sider', ''],
  ['Sidebredde', '21', true], ['Sidehøyde', '29,7', true], ['Orientasjon', 'Stående'],
  ['Vannmerke', '(Vannmerke)', true], ['Marginer', '1;1;1;1', true], ['Antall kopier', '1'],
  { section: '2. Ekstra side' },
  ['Mirror Margins', 'Usant'], ['Strekk til utskriftsområde', 'Usant'], ['Stopp før utskrift', '0'],
  ['Tittel før topptekst', 'Usant'], ['Ubegrenset høyde', 'Usant'], ['Ubegrenset brytning', 'Sant'],
  ['Segment per bredde', '1'], ['Segment per høyde', '1'],
  { section: '3. Kolonner' },
  ['Kolonner', '0'], ['Kolonnebredde', '0'], ['Kolonneavstand', '0'], ['Høyre til venstre', 'Usant'],
  { section: '4. Utseende' },
  { name: 'Børste', value: 'Solid', bold: true, swatch: true, open: true },
  { name: 'Kant', value: 'Ingen', bold: true, open: true },
  ['Betingelser', '[Ingen vilkår]', true],
  { name: 'Komponentstil', value: '', swatch: true },
  { section: '5. Oppførsel' },
  ['Aktivert', 'Sant'], ['Interaksjon', '(Interaksjon)', true], ['Skriv ut på forrige side', 'Usant'],
  ['Skriv ut topp- og bunntekst', 'Usant'], ['Nullstill sidetall', 'Usant'],
  { section: '6. Design' },
  ['(Navn)', 'Page1', true], ['(Alias)', ''], ['Stor høyde', 'Usant'],
]
const fields = [
  ['Spg_ParagrafID', 'abc'], ['Spg_Beskrivelse', 'abc'], ['Spg_GraderingID', 'abc'], ['Spg_UOFF', 'abc'],
  ['Spg_AGKODE', 'abc'], ['Spg_AGAAR', '123'], ['Spg_AGDAGER', '123'], ['Spg_ANVEND', 'abc'],
  ['spg_unique', '123'], ['spg_fradato', 'clock'], ['spg_tildato', 'clock'], ['spg_rekkefolge', '123'], ['spg_lov_id', '123'],
]
const textNodes = ['Text1', 'Text2', 'Text3', 'Text4', 'Text5', 'Text6', 'Text8', 'Text7']
const hRuler = Array.from({ length: 19 }, (_, i) => i)
const vRuler = Array.from({ length: 18 }, (_, i) => i)

const Ribbons = () => (
  <Ribbon>
    <Group $w={108} $pl={16}>
      <GroupBody>
        <BigButton $w={28} $off><PasteIcon />Lim<br />inn</BigButton>
        <SmallCol>
          <SmallRow><CutIcon />Kutt</SmallRow>
          <SmallRow><CopyIcon />Kopi</SmallRow>
          <SmallRow><DeleteIcon />Slett</SmallRow>
        </SmallCol>
      </GroupBody>
      <GroupLabel $pl={16}>Utklippstavle</GroupLabel>
    </Group>
    <Group $w={196} $pl={6}>
      <GroupBody $col>
        <ToolRow $h={21} $mt={13}>
          <Combo $w={127}>Arial<Caret color="#999" /></Combo>
          <Combo $w={50}>8<Caret color="#999" /></Combo>
        </ToolRow>
        <ToolRow $mt={10}>
          <Cell $w={21}><FontLetter $b>B</FontLetter></Cell>
          <Cell><FontLetter $i $serif $b>I</FontLetter></Cell>
          <Cell><FontLetter $u $b>U</FontLetter></Cell>
          <Cell $w={24}><FontLetter $b>A</FontLetter></Cell>
          <Cell $w={13}><Caret color="#bbb" /></Cell>
          <Cell $w={24}><FontA mark="up" /></Cell>
          <Cell $w={25}><FontA mark="down" small /></Cell>
          <Cell $w={28}><EraserIcon /></Cell>
        </ToolRow>
      </GroupBody>
      <GroupLabel $pl={6}>Skrifttype</GroupLabel>
    </Group>
    <Group $w={131} $pl={3}>
      <GroupBody $col>
        <ToolRow $mt={9}>
          <Cell><VAlignIcon at={0} /></Cell>
          <Cell><VAlignIcon at={3} /></Cell>
          <Cell><VAlignIcon at={6} /></Cell>
          <Cell $w={24}><RotateIcon /></Cell>
          <Cell $w={14}><Caret color="#bbb" /></Cell>
        </ToolRow>
        <ToolRow $mt={11}>
          <Cell><Bars kind="left" /></Cell>
          <Cell><Bars kind="center" /></Cell>
          <Cell><Bars kind="right" /></Cell>
          <Cell><Bars kind="justify" /></Cell>
          <Cell><WrapIcon /></Cell>
        </ToolRow>
      </GroupBody>
      <GroupLabel $pl={3}>Justering</GroupLabel>
    </Group>
    <Group $w={157} $pl={4}>
      <GroupBody $col>
        <ToolRow $mt={12}>
          <Cell><BorderBox side="all" /></Cell>
          <Cell $on><BorderBox /></Cell>
          <Cell><BorderBox side="top" /></Cell>
          <Cell><BorderBox side="left" /></Cell>
          <Cell><BorderBox side="bottom" /></Cell>
          <Cell><BorderBox side="right" /></Cell>
        </ToolRow>
        <ToolRow $mt={8}>
          <Cell><BorderBox side="shadow" /></Cell>
          <Cell $w={24}><FillIcon /></Cell>
          <Cell $w={14}><Caret color="#333" /></Cell>
          <Cell $w={24}><PenIcon /></Cell>
          <Cell $w={14}><Caret color="#333" /></Cell>
          <Cell $w={36}><LineStyle /></Cell>
          <Cell $w={9}><Caret color="#333" /></Cell>
        </ToolRow>
      </GroupBody>
      <GroupLabel $pl={4}>Grenser<Launcher /></GroupLabel>
    </Group>
    <Group $w={110} $pl={11}>
      <GroupBody $col>
        <ToolRow $mt={12}>
          <DisabledText>Tekstformat</DisabledText>
          <Caret color="#bbb" />
        </ToolRow>
        <ToolRow $mt={9}>
          <Cell $w={20}><TplIcon /></Cell>
          <Cell $w={19}><Caret color="#bbb" /></Cell>
          <Cell $w={19}><CalIcon /></Cell>
          <Cell $w={19}><Caret color="#bbb" /></Cell>
        </ToolRow>
      </GroupBody>
      <GroupLabel $pl={11}>Tekstformat</GroupLabel>
    </Group>
    <Group $w={302} $pl={8}>
      <GroupBody>
        <BigButton $w={58}><ConditionIcon />Betingelser</BigButton>
        <BigButton $w={57}><BrushIcon />Kopier<br />stil</BigButton>
        <BigButton $w={58}><StyleDesignerIcon />Stildesigner</BigButton>
        <StylePreview />
      </GroupBody>
      <GroupLabel $pl={8} $pr={18}>Stil<Launcher /></GroupLabel>
    </Group>
  </Ribbon>
)

const Toolbox = () => (
  <ToolColumn>
    <ToolBox>
      <ToolItem $h={25}><WindowsIcon /></ToolItem>
      <ToolItem $h={9}><Caret color="#333" /></ToolItem>
      <ToolItem $h={24}><GridTool /></ToolItem>
      <ToolItem $h={9}><Caret color="#333" /></ToolItem>
      <ToolItem $h={24}><DocsTool /></ToolItem>
      <ToolItem $h={9}><Caret color="#333" /></ToolItem>
      <ToolItem $h={24}><PictureTool /></ToolItem>
      <ToolItem $h={9}><Caret color="#333" /></ToolItem>
      <ToolDivider $m="2px 0 0" />
      <ToolItem $h={23}><PageIcon size={15} dark /></ToolItem>
      <ToolItem $h={23}><Bars kind="justify" color="#4f6c92" /></ToolItem>
      <ToolItem $h={23}><ToolA /></ToolItem>
      <ToolItem $h={23}><ToolA color="#8f5c4c" /></ToolItem>
      <ToolItem $h={23}><WinBand at="top" /></ToolItem>
      <ToolItem $h={23}><WinBand at="bottom" /></ToolItem>
      <ToolItem $h={23}><TableIcon size={14} /></ToolItem>
      <ToolItem $h={23}><TextItem /></ToolItem>
      <ToolItem $h={23}><PictureTool soft /></ToolItem>
      <ToolItem $h={22}><Svg w={12} h={2}><path d="M0 1h12" stroke="#555" /></Svg></ToolItem>
      <ToolDivider $m="3px 0 0" />
      <ToolItem $h={24}><ToolsIcon /></ToolItem>
    </ToolBox>
  </ToolColumn>
)

const DesignSurface = () => (
  <Designer>
    <DocTabs>
      <ActiveDocTab><PageIcon size={15} />Page1</ActiveDocTab>
      <DocTab $w={59}><CodeIcon />Kode</DocTab>
      <DocTab $w={113}><PreviewIcon />Forhåndsvisning</DocTab>
      <DocTab $w={134}><GlobeIcon />Web forhåndsvisning</DocTab>
      <DocTab $w={158}><GlobeIcon color="#bcd3ea" />Silverlight forhåndsvisning</DocTab>
      <DocTab $w={146}><WinRtIcon />WinRT-forhåndsvisning</DocTab>
      <DocTab $w={130}><GlobeIcon color="#5b9bb8" />HTML forhåndsvisning</DocTab>
    </DocTabs>
    <HRuler>
      {hRuler.map((n) => (
        <React.Fragment key={n}>
          <HCell>{n}</HCell>
          <HCell><i /></HCell>
        </React.Fragment>
      ))}
    </HRuler>
    <Work>
      <VRuler>
        {vRuler.map((n) => (
          <React.Fragment key={n}>
            <VCell>{n}</VCell>
            <VCell><i /></VCell>
          </React.Fragment>
        ))}
      </VRuler>
      <Canvas>
        <PageSheet>
          <ReportArea>
            <BandHeader>DataBand1; Datakilde: Persons</BandHeader>
            <Band>
              <Field $x={16} $y={15} $w={38} $h={23} $pad={2} $bold $white $rule $marks>Id:</Field>
              <Field $x={54} $y={15} $w={694} $h={23} $bold $white>{'{Persons.Spg_ParagrafID}'}</Field>
              <Field $x={54} $y={39} $w={79} $h={23} $marks>Description:</Field>
              <Field $x={133} $y={39} $w={615} $h={23}>{'{Persons.Spg_ANVEND}'}</Field>
              <Field $x={54} $y={86} $w={79} $h={24} $marks>From date:</Field>
              <Field $x={133} $y={86} $w={615} $h={24}>{'{Persons.spg_fradato}'}</Field>
              <Field $x={54} $y={110} $w={79} $h={23} $marks>To date:</Field>
              <Field $x={133} $y={110} $w={615} $h={23}>{'{Persons.spg_tildato}'}</Field>
              <Cross $x={133} $y={109} />
              <EdgeTick $y={15} />
              <EdgeTick $y={109} />
            </Band>
            <Highlight />
            <Pointer width="60" height="92" viewBox="0 0 60 92">
              <path d="M58 1L1 91" stroke="#0b2db0" strokeWidth="2" />
            </Pointer>
            <Note>User can select if he wants to view this field or not.</Note>
          </ReportArea>
        </PageSheet>
      </Canvas>
      <ScrollTrack>
        <ScrollEnd $h={19}><Caret color="#bbb" up /></ScrollEnd>
        <ScrollThumb $h={409} />
        <ScrollEnd $grow />
        <ScrollEnd $h={16}><Caret color="#bbb" /></ScrollEnd>
      </ScrollTrack>
    </Work>
  </Designer>
)

const ReportTree = () => (
  <Panel $w={245} $ml={3}>
    <PanelHead>Rapporttre<PinIcon /><CloseIcon /></PanelHead>
    <SearchRow>
      <SearchBox />
      <FindButton><span><u>F</u>inn</span></FindButton>
    </SearchRow>
    <Tree $top={6} $grow>
      <TreeLine $x={73} $y={54} $h={120} />
      <TreeRow $left={12}>
        <Toggle $gap={6}><PlusMinus /></Toggle>
        <IconSlot $w={14}><ReportIcon /></IconSlot>
        <NodeLabel $ml={5}>Report</NodeLabel>
      </TreeRow>
      <TreeRow $left={31}>
        <Toggle $gap={6}><PlusMinus /></Toggle>
        <IconSlot $w={14}><PageIcon /></IconSlot>
        <NodeLabel $ml={4} $sel>Page1</NodeLabel>
      </TreeRow>
      <TreeRow $left={50}>
        <Toggle $gap={6}><PlusMinus /></Toggle>
        <IconSlot $w={14}><TableIcon /></IconSlot>
        <NodeLabel $ml={4}>DataBand1</NodeLabel>
      </TreeRow>
      {textNodes.map((t) => (
        <TreeRow key={t} $left={73}>
          <Stub $w={10} />
          <IconSlot $w={14}><TextItem /></IconSlot>
          <NodeLabel $ml={4}>{t}</NodeLabel>
        </TreeRow>
      ))}
    </Tree>
  </Panel>
)

const Properties = () => (
  <Panel $w={351} $ml={4}>
    <PanelHead>Egenskaper<PinIcon /><CloseIcon /></PanelHead>
    <ComboRow>
      <SideCombo>Page1 : Side<Caret color="#222" /></SideCombo>
      <SquareButton><SortAz arrow="#666" /></SquareButton>
    </ComboRow>
    <PropTools>
      <PropToggle $on><CategorizedIcon /></PropToggle>
      <PropToggle><SortAz /></PropToggle>
      <PropSep $m="0 3px 0 2px" />
      <PropToggle $on><LinesBox /></PropToggle>
      <PropToggle><BoltIcon /></PropToggle>
      <PropSep $m="0 8px 0 2px" />
      <PropToggle><FormIcon /></PropToggle>
    </PropTools>
    <PropGrid>
      <PropRows>
        {props.map((r, i) => {
          if (r.section) {
            return (
              <SectionRow key={i}>
                <Gutter><Svg w={7} h={7}><path d="M7 0v7H0z" fill="#444" /></Svg></Gutter>
                <SectionName>{r.section}</SectionName>
              </SectionRow>
            )
          }
          const row = Array.isArray(r) ? { name: r[0], value: r[1], bold: r[2] } : r
          return (
            <PropRow key={i}>
              <Gutter>
                {row.open && <Svg w={6} h={9}><path d="M.5.5l5 4-5 4z" stroke="#999" fill="#fff" /></Svg>}
              </Gutter>
              <PropName>{row.name}</PropName>
              <PropValue $bold={row.bold}>
                {row.swatch && <Swatch />}
                {row.value}
              </PropValue>
            </PropRow>
          )
        })}
      </PropRows>
      <PropScroll>
        <ScrollEnd $h={18}><Caret color="#666" up /></ScrollEnd>
        <ScrollThumb $h={429} $color="linear-gradient(90deg,#e6e6e6,#d8d8d8)" />
        <ScrollEnd $grow />
        <ScrollEnd $h={16}><Caret color="#666" /></ScrollEnd>
      </PropScroll>
    </PropGrid>
    <DescBox><b>(Navn)</b>Component name.</DescBox>
  </Panel>
)

const Dictionary = () => (
  <Panel $w={298} $ml={6}>
    <PanelHead>Ordbok<PinIcon /><CloseIcon /></PanelHead>
    <DictTools>
      <DictItem $w={64} $start>Hendelser</DictItem>
      <DictItem $w={14}><Caret /></DictItem>
      <DictItem $w={22}><NewSourceIcon /></DictItem>
      <DictItem $w={12}><Caret /></DictItem>
      <DictItem $w={26}><EditIcon /></DictItem>
      <DictItem $w={22}><RedX /></DictItem>
      <DictSep />
      <DictItem $w={14}><Arrow /></DictItem>
      <DictItem $w={28}><Arrow down /></DictItem>
      <DictItem $w={14}><SortAz arrow="#555" /></DictItem>
      <DictItem $w={20}><Caret /></DictItem>
    </DictTools>
    <Tree $top={1} $grow>
      <TreeLine $x={13} $y={12} $h={295} />
      <TreeLine $x={32} $y={28} $h={8} />
      <TreeLine $x={51} $y={44} $h={8} />
      <TreeLine $x={70} $y={50} $h={204} />
      <TreeRow $left={9}>
        <Toggle $gap={6}><PlusMinus /></Toggle>
        <IconSlot $w={14}><TableIcon /></IconSlot>
        <NodeLabel $ml={4} $sel>Datakilder</NodeLabel>
      </TreeRow>
      <TreeRow $left={28}>
        <Toggle $gap={6}><PlusMinus /></Toggle>
        <IconSlot $w={14}><CylinderIcon /></IconSlot>
        <NodeLabel $ml={4}>MSSQL1 [MS SQL]</NodeLabel>
      </TreeRow>
      <TreeRow $left={47}>
        <Toggle $gap={6}><PlusMinus /></Toggle>
        <IconSlot $w={14}><TableIcon /></IconSlot>
        <NodeLabel $ml={4}>Persons</NodeLabel>
      </TreeRow>
      {fields.map(([name, type]) => (
        <TreeRow key={name} $left={70}>
          <Stub $w={10} />
          {type === 'clock' ? <ClockBadge /> : <FieldBadge label={type} />}
          <NodeLabel $ml={3}>{name}</NodeLabel>
        </TreeRow>
      ))}
      <TreeRow $left={13}>
        <Stub $w={10} />
        <IconSlot $w={15}><BusinessIcon /></IconSlot>
        <NodeLabel $ml={3}>Business Objects</NodeLabel>
      </TreeRow>
      <TreeRow $left={13}>
        <Stub $w={10} />
        <FieldBadge label="VAR" />
        <NodeLabel $ml={3}>Variabler</NodeLabel>
      </TreeRow>
      <TreeRow $left={9}>
        <Toggle $gap={5}><PlusMinus plus /></Toggle>
        <FieldBadge label="Σ#" />
        <NodeLabel $ml={3}>Systemvariabler</NodeLabel>
      </TreeRow>
      <TreeRow $left={9}>
        <Toggle $gap={5}><PlusMinus plus /></Toggle>
        <FxGlyph>fx</FxGlyph>
        <NodeLabel $ml={3}>Funksjoner</NodeLabel>
      </TreeRow>
    </Tree>
    <CheckList>
      <CheckRow><CheckBox><CheckMark /></CheckBox>Skap felt ved dobbeltklikk</CheckRow>
      <CheckRow><CheckBox><CheckMark /></CheckBox>Lag etikett</CheckRow>
      <CheckRow><CheckBox />Bruk alias</CheckRow>
    </CheckList>
  </Panel>
)

const Status = () => (
  <StatusBar>
    <StatusItem $w={92} $pl={12} $gap={14}>Centimeter<Caret color="#fff" up /></StatusItem>
    <StatusSep />
    <StatusItem $w={112} $pl={10} $gap={10}>
      <Svg w={7} h={11}><path d="M0 0l7 5.5L0 11z" fill="#fff" /></Svg>Rapportsjekker
    </StatusItem>
    <StatusSep />
    <StatusItem $w={47} $pl={7}>Page1</StatusItem>
    <StatusSep />
    <StatusItem $w={1284} $pl={4} $gap={6}>X:9,62 <span>Y:-0,82</span></StatusItem>
    <StatusSep />
    <StatusItem $w={99} $pl={8} $gap={6}>
      <StatusIcon kind="width" /><StatusIcon kind="height" /><StatusIcon kind="page" /><StatusIcon kind="100" />
    </StatusItem>
    <StatusItem $w={41} $pl={0}>100%</StatusItem>
    <Svg w={10} h={2}><rect width="10" height="2" fill="#fff" /></Svg>
    <Slider />
    <Svg w={10} h={10}><path d="M0 5h10M5 0v10" stroke="#fff" strokeWidth="2" /></Svg>
    <Grip />
  </StatusBar>
)

function App() {
  return (
    <>
      <Global />
      <Frame>
        <TitleBar>
          <Qat>
            <AppLogo />
            <QatSep />
            <QatButton $w={26}><SaveIcon /></QatButton>
            <QatButton $w={24}><UndoIcon color="#3f78b3" /></QatButton>
            <QatButton $w={33}><UndoIcon color="#ccc" flip /></QatButton>
            <Svg w={7} h={8}><path d="M0 0h7M0 3h7L3.5 7z" stroke="#555" fill="#555" /></Svg>
          </Qat>
          <TitleText>Report.mrt &nbsp;- <span>Designverktøy</span></TitleText>
          <WinButtons><WinMin /><WinMax /><WinClose /></WinButtons>
        </TitleBar>
        <TabRow>
          <FileTab>FIL</FileTab>
          <RibbonTab $w={64} $ml={4} $active>HJEM</RibbonTab>
          <RibbonTab $w={54} $ml={0}>SIDE</RibbonTab>
          <RibbonTab $w={85} $ml={12}>UTFORMING</RibbonTab>
          <LangPicker>Velg språk på grensesnitt<Caret color="#888" /><b>?</b></LangPicker>
        </TabRow>
        <Ribbons />
        <Main>
          <Toolbox />
          <DesignSurface />
          <ReportTree />
          <Properties />
          <Dictionary />
        </Main>
        <Status />
      </Frame>
    </>
  )
}

export default App
